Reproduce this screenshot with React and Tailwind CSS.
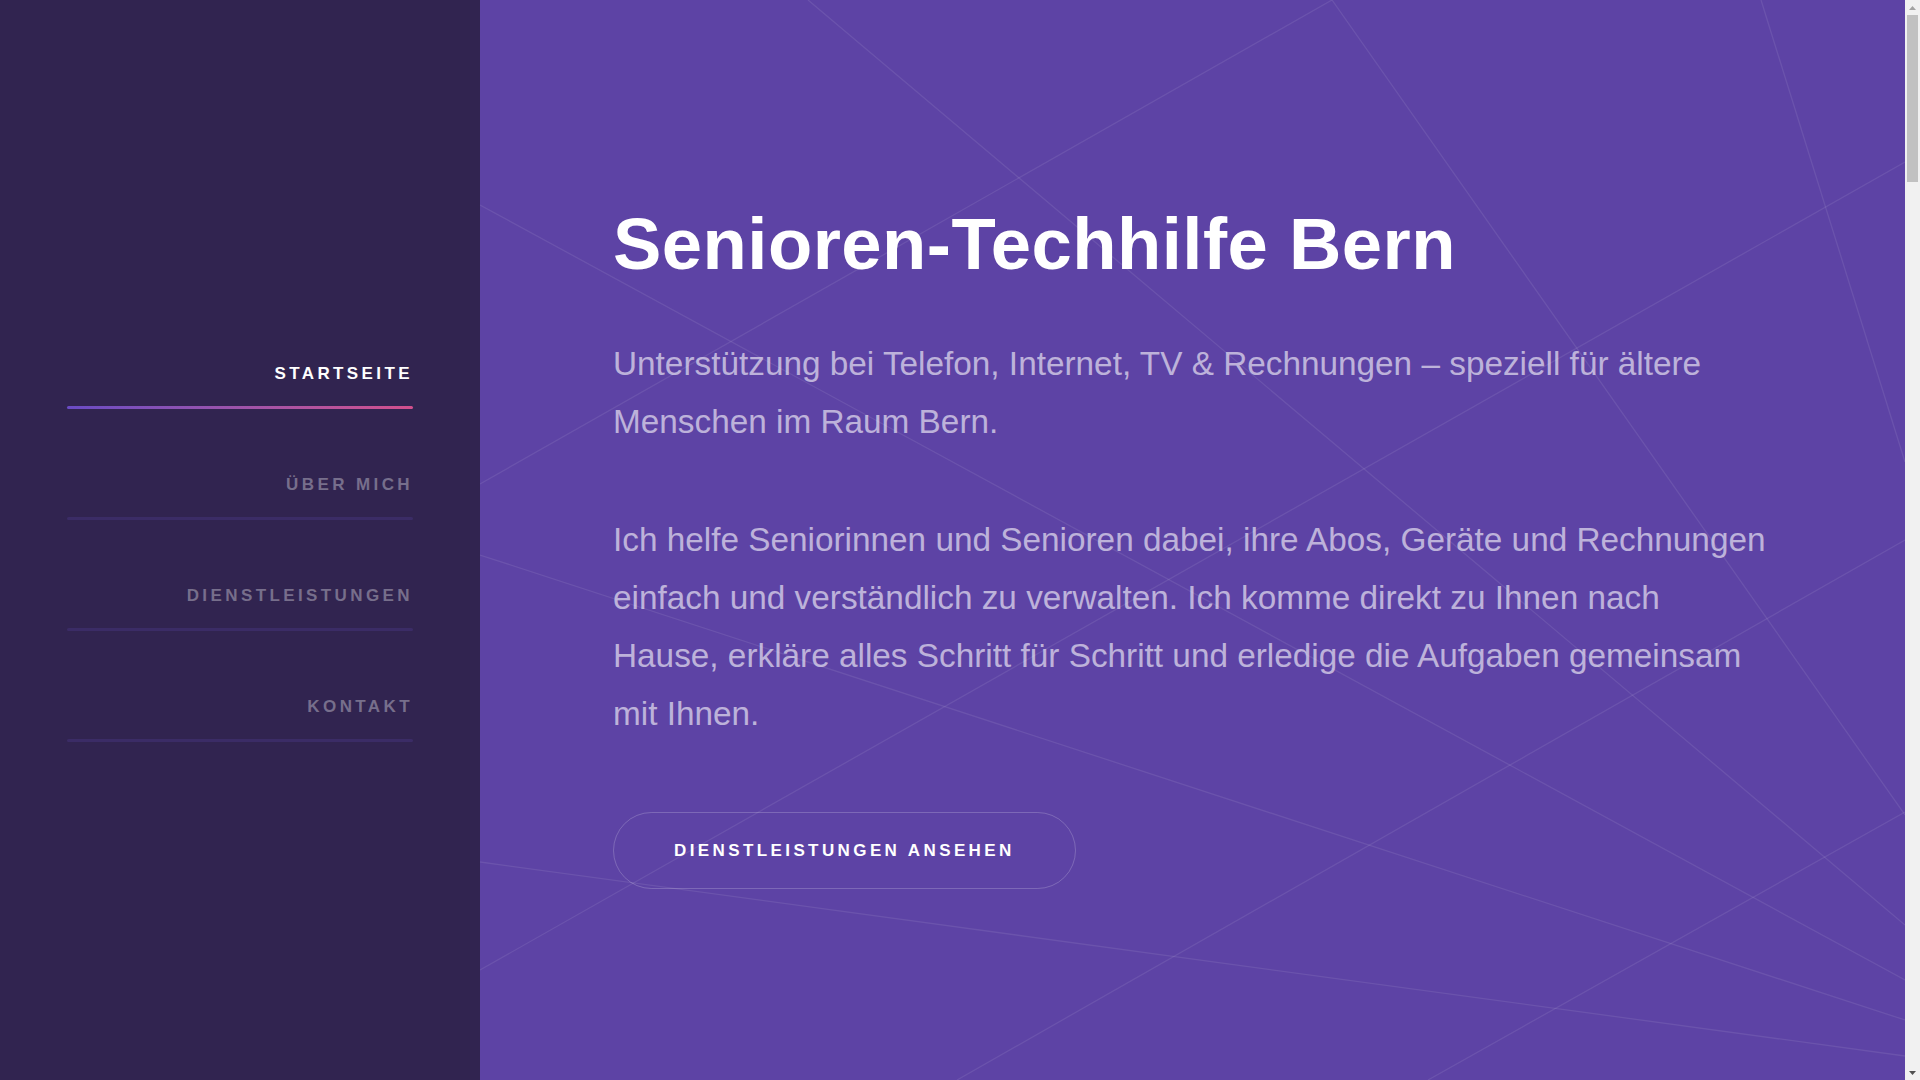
export default function App() {
  const nav = [
    { label: "STARTSEITE", active: true },
    { label: "ÜBER MICH" },
    { label: "DIENSTLEISTUNGEN" },
    { label: "KONTAKT" },
  ];
  const lines = [
    [328, 0, 1425, 925],
    [0, 205, 1425, 980],
    [0, 484, 852, 0],
    [852, 0, 1425, 815],
    [1281, 0, 1425, 462],
    [0, 970, 1425, 162],
    [0, 555, 1425, 1020],
    [0, 862, 1425, 1056],
    [948, 1080, 1425, 812],
    [477, 1080, 1425, 540],
  ];
  return (
    <div className="flex h-screen overflow-hidden bg-[#5d43a5] font-['Liberation_Sans',Arial,sans-serif]">
      <aside className="h-screen w-[480px] shrink-0 bg-[#312450] px-[67px] pt-[364px]">
        <ul className="flex flex-col gap-[66px]">
          {nav.map((item) => (
            <li key={item.label}>
              <a
                href="#"
                className={
                  item.active
                    ? "block text-right text-[17px] leading-[20px] font-bold tracking-[0.2em] text-white"
                    : "block text-right text-[17px] leading-[20px] font-bold tracking-[0.2em] text-white/35"
                }
              >
                {item.label}
              </a>
              <div
                className={
                  item.active
                    ? "mt-[22px] h-[3px] rounded-full bg-linear-to-r from-[#6a4bc4] to-[#d24f8c]"
                    : "mt-[22px] h-[3px] rounded-full bg-[#3b2c66]"
                }
              />
            </li>
          ))}
        </ul>
      </aside>

      <main className="relative h-screen min-w-0 flex-1 overflow-hidden pl-[133px] pt-[204px]">
        <svg
          className="pointer-events-none absolute inset-0 h-full w-full"
          viewBox="0 0 1425 1080"
          preserveAspectRatio="none"
        >
          {lines.map(([x1, y1, x2, y2], i) => (
            <line
              key={i}
              x1={x1}
              y1={y1}
              x2={x2}
              y2={y2}
              stroke="#ffffff"
              strokeOpacity="0.085"
              strokeWidth="1.3"
            />
          ))}
        </svg>
        <div className="relative max-w-[1158px]">
          <h1 className="mb-[52px] text-[72.5px] leading-[79px] font-bold tracking-[0.45px] text-white">
            Senioren-Techhilfe Bern
          </h1>
          <p className="mb-[60px] text-[33.35px] leading-[58px] text-white/60">
            Unterstützung bei Telefon, Internet, TV &amp; Rechnungen – speziell für ältere Menschen im Raum Bern.
          </p>
          <p className="text-[33.35px] leading-[58px] text-white/60">
            Ich helfe Seniorinnen und Senioren dabei, ihre Abos, Geräte und Rechnungen einfach und verständlich zu verwalten. Ich komme direkt zu Ihnen nach Hause, erkläre alles Schritt für Schritt und erledige die Aufgaben gemeinsam mit Ihnen.
          </p>
          <a
            href="#"
            className="mt-[69px] inline-flex h-[77px] items-center rounded-full border border-white/20 px-[60px] text-[17px] leading-[20px] font-bold tracking-[0.2em] text-white"
          >
            DIENSTLEISTUNGEN ANSEHEN
          </a>
        </div>
      </main>

      <div className="flex h-screen w-[15px] shrink-0 flex-col bg-[#f1f1f1]">
        <div className="flex h-[15px] items-center justify-center">
          <svg width="7" height="4" viewBox="0 0 7 4">
            <path d="M0 4 L3.5 0 L7 4 Z" fill="#a3a3a3" />
          </svg>
        </div>
        <div className="mx-[2px] h-[167px] bg-[#c1c1c1]" />
        <div className="flex-1" />
        <div className="flex h-[15px] items-center justify-center">
          <svg width="7" height="4" viewBox="0 0 7 4">
            <path d="M0 0 L7 0 L3.5 4 Z" fill="#505050" />
          </svg>
        </div>
      </div>
    </div>
  );
}
